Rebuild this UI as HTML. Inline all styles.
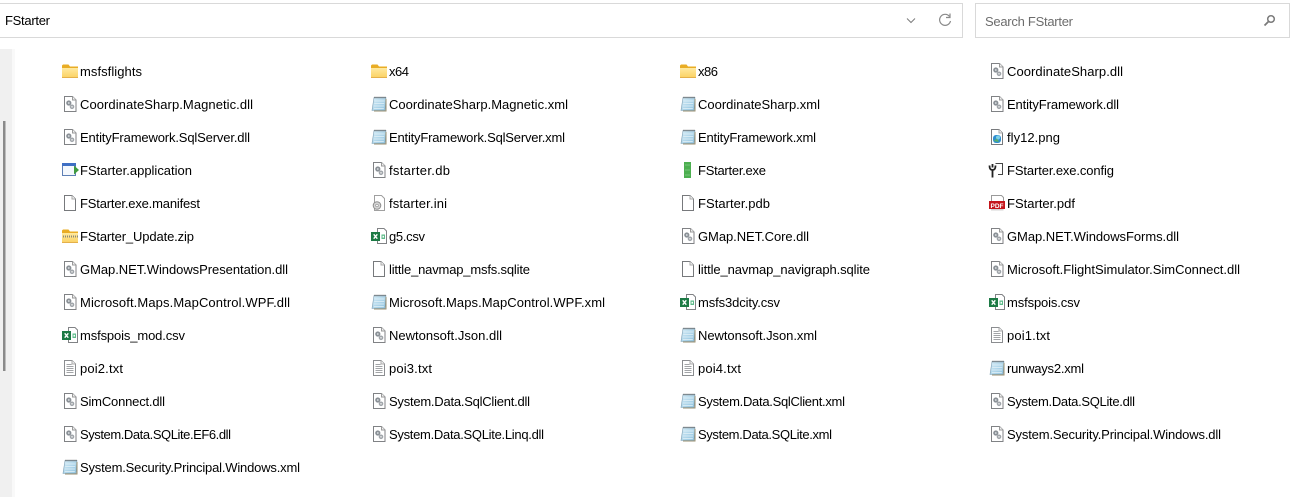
<!DOCTYPE html>
<html>
<head>
<meta charset="utf-8">
<title>FStarter</title>
<style>
html,body{margin:0;padding:0;background:#fff;width:1290px;height:497px;overflow:hidden}
svg{display:block}
text{font-family:"Liberation Sans",sans-serif;font-size:13px;fill:#000;transform:translateY(1px)}
</style>
</head>
<body>
<svg width="1290" height="497" viewBox="0 0 1290 497" xmlns="http://www.w3.org/2000/svg">
<defs>
<linearGradient id="fg" x1="0" y1="0" x2="0" y2="1"><stop offset="0" stop-color="#ffe9a0"/><stop offset="1" stop-color="#fbd264"/></linearGradient>
<linearGradient id="ng" x1="0" y1="0" x2="1" y2="1"><stop offset="0" stop-color="#d5ecf7"/><stop offset="1" stop-color="#8fc2de"/></linearGradient>
<g id="folder"><path d="M0 2.500V14.500H16V3.500H8L6.500 1.500H1z" fill="#e9ad25"/><rect x="0" y="5" width="16" height="9.500" fill="url(#fg)"/><path d="M0 14.500H16" stroke="#e4b04a"/></g>
<g id="dll"><path d="M2.500 .5H10.500L14 4V15.500H2.500z" fill="#fff" stroke="#808285"/><path d="M10.500 .5V4H14" fill="#eee" stroke="#9a9a9a"/><circle cx="6.800" cy="7" r="2.600" fill="#8a9096"/><circle cx="6.800" cy="7" r=".9" fill="#dfe3e6"/><circle cx="10" cy="10.800" r="2.300" fill="#a0a5aa"/><circle cx="10" cy="10.800" r=".8" fill="#eee"/></g>
<g id="xml"><path d="M3 1.500H15L14 14.500H1z" fill="url(#ng)" stroke="#7f9fb3" stroke-width=".6"/><path d="M15 3V15H3" fill="none" stroke="#9a8f70"/><path d="M3.500 1.500H15" stroke="#4a4a4a" stroke-dasharray="1 1" stroke-width="1.600"/><path d="M3.500 5H13.500M3.200 7.500H13.200M3 10H13M2.800 12.500H12.800" stroke="#e2f1f8" stroke-width=".8"/></g>
<g id="blank"><path d="M2.500 .5H10L13.500 4V15.500H2.500z" fill="#fff" stroke="#77797c"/><path d="M10 .5V4H13.500" fill="#f2f2f2" stroke="#aaa"/></g>
<g id="txt"><path d="M2.500 .5H10L13.500 4V15.500H2.500z" fill="#fff" stroke="#8b8d90"/><path d="M10 .5V4H13.500" fill="#f2f2f2" stroke="#aaa"/><path d="M4.500 4.500H9.500M4.500 6.500H11.500M4.500 8.500H11.500M4.500 10.500H11.500M4.500 12.500H11.500" stroke="#a2a4a7"/></g>
<g id="csv"><path d="M6.500 .5H13L15.500 3V15.500H6.500z" fill="#fff" stroke="#808285"/><rect x="0" y="4" width="9" height="9" fill="#1d7a45"/><path d="M2.700 6.300L6.300 10.700M6.300 6.300L2.700 10.700" stroke="#fff" stroke-width="1.400"/><path d="M10.500 6.500H14V11H10.500z" fill="#5dbb8a"/><rect x="11.500" y="7.800" width="1.500" height="1.800" fill="#fff"/></g>
</defs>

<rect width="1290" height="497" fill="#fff"/>

<!-- address bar -->
<path d="M0 3.500H962.500V37.500H0" fill="#fff" stroke="#d9d9d9"/>
<text x="5" y="24" textLength="45" lengthAdjust="spacing">FStarter</text>
<path d="M907 18.500L911 22.500L915 18.500" fill="none" stroke="#7c7c7c"/>
<path d="M949.500 16.500A5.500 5.500 0 1 0 950.500 21" fill="none" stroke="#8a8a8a" stroke-width="1.200"/>
<path d="M950 13.500V17.500H946" fill="none" stroke="#8a8a8a" stroke-width="1.200"/>

<!-- search box -->
<rect x="975.500" y="3.500" width="314" height="34" fill="#fff" stroke="#d9d9d9"/>
<text x="985" y="25" textLength="88" lengthAdjust="spacing" style="fill:#6d6d6d">Search FStarter</text>
<circle cx="1271" cy="19" r="3.300" fill="none" stroke="#7a7a7a" stroke-width="1.500"/>
<path d="M1268.500 21.500L1264.500 25.500" stroke="#7a7a7a" stroke-width="1.800"/>

<!-- left pane -->
<rect x="0" y="49" width="12" height="448" fill="#f0f0f0"/>
<rect x="12" y="49" width="3" height="448" fill="#f9f9f9"/>
<rect x="3" y="121" width="2.500" height="250" fill="#8a8a8a"/>

<!-- row 71 -->
<use href="#folder" x="62" y="63"/><text x="80" y="75" textLength="62" lengthAdjust="spacing">msfsflights</text>
<use href="#folder" x="371" y="63"/><text x="389" y="75" textLength="20" lengthAdjust="spacing">x64</text>
<use href="#folder" x="680" y="63"/><text x="698" y="75" textLength="20" lengthAdjust="spacing">x86</text>
<use href="#dll" x="989" y="63"/><text x="1007" y="75" textLength="116" lengthAdjust="spacing">CoordinateSharp.dll</text>

<!-- row 104 -->
<use href="#dll" x="62" y="96"/><text x="80" y="108" textLength="173" lengthAdjust="spacing">CoordinateSharp.Magnetic.dll</text>
<use href="#xml" x="371" y="96"/><text x="389" y="108" textLength="179" lengthAdjust="spacing">CoordinateSharp.Magnetic.xml</text>
<use href="#xml" x="680" y="96"/><text x="698" y="108" textLength="122" lengthAdjust="spacing">CoordinateSharp.xml</text>
<use href="#dll" x="989" y="96"/><text x="1007" y="108" textLength="112" lengthAdjust="spacing">EntityFramework.dll</text>

<!-- row 137 -->
<use href="#dll" x="62" y="129"/><text x="80" y="141" textLength="170" lengthAdjust="spacing">EntityFramework.SqlServer.dll</text>
<use href="#xml" x="371" y="129"/><text x="389" y="141" textLength="176" lengthAdjust="spacing">EntityFramework.SqlServer.xml</text>
<use href="#xml" x="680" y="129"/><text x="698" y="141" textLength="118" lengthAdjust="spacing">EntityFramework.xml</text>
<g transform="translate(989 129)"><use href="#blank"/><rect x="4" y="6" width="8" height="8" rx="3" fill="#2f8fd0"/><circle cx="9" cy="8.500" r="2" fill="#7fd0e8"/><path d="M4.500 12L8 9.500L10 13z" fill="#5ab06a"/></g><text x="1007" y="141" textLength="53" lengthAdjust="spacing">fly12.png</text>

<!-- row 170 -->
<g transform="translate(62 162)"><rect x=".5" y="1.500" width="13" height="12" fill="#f4f8fd" stroke="#5d7fb5"/><rect x="0" y="1" width="14" height="3" fill="#3f6fc4"/><path d="M12 3.500L17 8L12 12.500z" fill="#3f9b3f"/></g><text x="80" y="174" textLength="112" lengthAdjust="spacing">FStarter.application</text>
<use href="#dll" x="371" y="162"/><text x="389" y="174" textLength="61" lengthAdjust="spacing">fstarter.db</text>
<rect x="684" y="162" width="7" height="16" fill="#4caf50"/><path d="M685 165H690M685 170H690M685 175H690" stroke="#78c47c"/><text x="698" y="174" textLength="68" lengthAdjust="spacing">FStarter.exe</text>
<g transform="translate(989 162)"><path d="M6.500 1.500H13.500V12.500H9" fill="#fff" stroke="#444"/><path d="M3.500 2V5.500M.5 3.500C.5 7 1.500 8 3.500 8S6.500 7 6.500 3.500M3.500 8V15.500" fill="none" stroke="#222" stroke-width="1.800"/></g><text x="1007" y="174" textLength="107" lengthAdjust="spacing">FStarter.exe.config</text>

<!-- row 203 -->
<use href="#blank" x="62" y="195"/><text x="80" y="207" textLength="120" lengthAdjust="spacing">FStarter.exe.manifest</text>
<g transform="translate(371 195)"><path d="M3.500 .5H10.500L13.500 3.500V15.500H3.500z" fill="#fff" stroke="#a0a0a0"/><circle cx="6" cy="10.500" r="3.800" fill="#d6d6d6" stroke="#8d8d8d"/><circle cx="6" cy="10.500" r="1.300" fill="#fff" stroke="#8d8d8d" stroke-width=".6"/></g><text x="389" y="207" textLength="58" lengthAdjust="spacing">fstarter.ini</text>
<use href="#blank" x="680" y="195"/><text x="698" y="207" textLength="72" lengthAdjust="spacing">FStarter.pdb</text>
<g transform="translate(988 195)"><path d="M3.500 .5H13.500L15.500 2.500V8H3.500z" fill="#fff" stroke="#9a9a9a"/><rect x="1" y="6" width="16" height="8" fill="#c4161c"/><text x="9" y="11.800" text-anchor="middle" style="font-size:6.500px;font-weight:bold;fill:#fff">PDF</text><rect x="3" y="14" width="12.500" height="1.500" fill="#d6d6d6"/></g><text x="1007" y="207" textLength="68" lengthAdjust="spacing">FStarter.pdf</text>

<!-- row 236 -->
<g transform="translate(62 228)"><use href="#folder"/><path d="M1 8.500H16" stroke="#8b8b7a" stroke-width="2" stroke-dasharray="1 1"/></g><text x="80" y="240" textLength="114" lengthAdjust="spacing">FStarter_Update.zip</text>
<use href="#csv" x="371" y="228"/><text x="389" y="240" textLength="36" lengthAdjust="spacing">g5.csv</text>
<use href="#dll" x="680" y="228"/><text x="698" y="240" textLength="111" lengthAdjust="spacing">GMap.NET.Core.dll</text>
<use href="#dll" x="989" y="228"/><text x="1007" y="240" textLength="172" lengthAdjust="spacing">GMap.NET.WindowsForms.dll</text>

<!-- row 269 -->
<use href="#dll" x="62" y="261"/><text x="80" y="273" textLength="208" lengthAdjust="spacing">GMap.NET.WindowsPresentation.dll</text>
<use href="#blank" x="371" y="261"/><text x="389" y="273" textLength="141" lengthAdjust="spacing">little_navmap_msfs.sqlite</text>
<use href="#blank" x="680" y="261"/><text x="698" y="273" textLength="172" lengthAdjust="spacing">little_navmap_navigraph.sqlite</text>
<use href="#dll" x="989" y="261"/><text x="1007" y="273" textLength="233" lengthAdjust="spacing">Microsoft.FlightSimulator.SimConnect.dll</text>

<!-- row 302 -->
<use href="#dll" x="62" y="294"/><text x="80" y="306" textLength="210" lengthAdjust="spacing">Microsoft.Maps.MapControl.WPF.dll</text>
<use href="#xml" x="371" y="294"/><text x="389" y="306" textLength="216" lengthAdjust="spacing">Microsoft.Maps.MapControl.WPF.xml</text>
<use href="#csv" x="680" y="294"/><text x="698" y="306" textLength="82" lengthAdjust="spacing">msfs3dcity.csv</text>
<use href="#csv" x="989" y="294"/><text x="1007" y="306" textLength="73" lengthAdjust="spacing">msfspois.csv</text>

<!-- row 335 -->
<use href="#csv" x="62" y="327"/><text x="80" y="339" textLength="105" lengthAdjust="spacing">msfspois_mod.csv</text>
<use href="#dll" x="371" y="327"/><text x="389" y="339" textLength="113" lengthAdjust="spacing">Newtonsoft.Json.dll</text>
<use href="#xml" x="680" y="327"/><text x="698" y="339" textLength="119" lengthAdjust="spacing">Newtonsoft.Json.xml</text>
<use href="#txt" x="989" y="327"/><text x="1007" y="339" textLength="43" lengthAdjust="spacing">poi1.txt</text>

<!-- row 368 -->
<use href="#txt" x="62" y="360"/><text x="80" y="372" textLength="43" lengthAdjust="spacing">poi2.txt</text>
<use href="#txt" x="371" y="360"/><text x="389" y="372" textLength="43" lengthAdjust="spacing">poi3.txt</text>
<use href="#txt" x="680" y="360"/><text x="698" y="372" textLength="43" lengthAdjust="spacing">poi4.txt</text>
<use href="#xml" x="989" y="360"/><text x="1007" y="372" textLength="77" lengthAdjust="spacing">runways2.xml</text>

<!-- row 401 -->
<use href="#dll" x="62" y="393"/><text x="80" y="405" textLength="85" lengthAdjust="spacing">SimConnect.dll</text>
<use href="#dll" x="371" y="393"/><text x="389" y="405" textLength="141" lengthAdjust="spacing">System.Data.SqlClient.dll</text>
<use href="#xml" x="680" y="393"/><text x="698" y="405" textLength="147" lengthAdjust="spacing">System.Data.SqlClient.xml</text>
<use href="#dll" x="989" y="393"/><text x="1007" y="405" textLength="128" lengthAdjust="spacing">System.Data.SQLite.dll</text>

<!-- row 434 -->
<use href="#dll" x="62" y="426"/><text x="80" y="438" textLength="151" lengthAdjust="spacing">System.Data.SQLite.EF6.dll</text>
<use href="#dll" x="371" y="426"/><text x="389" y="438" textLength="155" lengthAdjust="spacing">System.Data.SQLite.Linq.dll</text>
<use href="#xml" x="680" y="426"/><text x="698" y="438" textLength="134" lengthAdjust="spacing">System.Data.SQLite.xml</text>
<use href="#dll" x="989" y="426"/><text x="1007" y="438" textLength="214" lengthAdjust="spacing">System.Security.Principal.Windows.dll</text>

<!-- row 467 -->
<use href="#xml" x="62" y="459"/><text x="80" y="471" textLength="220" lengthAdjust="spacing">System.Security.Principal.Windows.xml</text>
</svg>
</body>
</html>
